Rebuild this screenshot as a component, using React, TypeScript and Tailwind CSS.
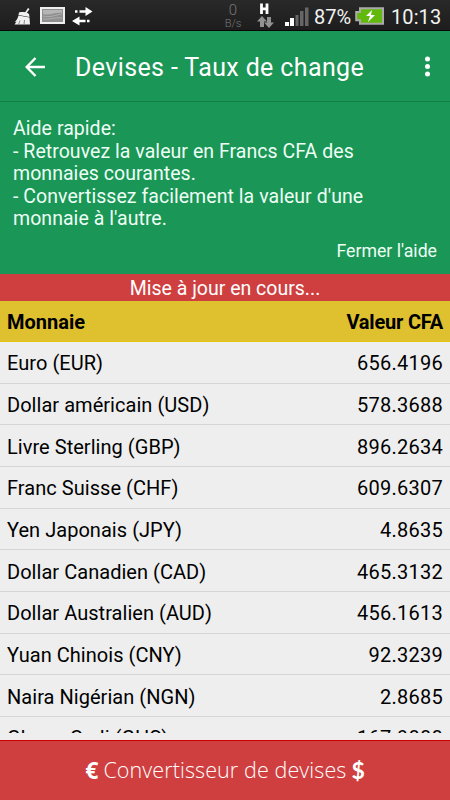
const rates = [
  { name: 'Euro (EUR)', value: '656.4196' },
  { name: 'Dollar américain (USD)', value: '578.3688' },
  { name: 'Livre Sterling (GBP)', value: '896.2634' },
  { name: 'Franc Suisse (CHF)', value: '609.6307' },
  { name: 'Yen Japonais (JPY)', value: '4.8635' },
  { name: 'Dollar Canadien (CAD)', value: '465.3132' },
  { name: 'Dollar Australien (AUD)', value: '456.1613' },
  { name: 'Yuan Chinois (CNY)', value: '92.3239' },
  { name: 'Naira Nigérian (NGN)', value: '2.8685' },
  { name: 'Ghana Cedi (GHS)', value: '167.9888' },
];

function StatusBar() {
  return (
    <div className="h-[31px] shrink-0 flex items-center bg-linear-to-b from-[#292929] to-[#1d1d1d] border-b border-[#080808] text-[#f2f2f2]">
      <svg className="w-[94px] h-[30px] shrink-0" viewBox="0 0 94 30" fill="none">
        <path d="M28 8l1.500 1-3.500 5h-2z" fill="#f0f0f0" />
        <path d="M19 12.500c3-1 7-.5 10 1.500l.5 3-11-2z" fill="#f0f0f0" />
        <path d="M18.500 15.500l11 2 .5 7H14.500l2-3-2 .5c2-1.500 3.500-4 4-6.500z" fill="#f0f0f0" />
        <path d="M20 20.500l-1.500 4M24.500 20l-.5 4.500" stroke="#8a8a8a" />
        <rect x="41" y="8" width="23" height="15" fill="#8f8f8f" stroke="#efefef" strokeWidth="2" />
        <path d="M43 10h19v3c-7-1-11 3-19 1z" fill="#b5b5b5" />
        <path d="M43 16c7 2 11-1 19-2M43 19c6 1 11-2 19-1" stroke="#b0b0b0" />
        <path d="M75 11.500h2.500M79.500 11.500h7M79 21h6.500M87 21h2.500" stroke="#fff" strokeWidth="2.600" />
        <path d="M85.500 7l7 4.500-7 4.500zM79.500 16.500l-7.500 4.500 7.500 4.500z" fill="#fff" />
      </svg>
      <div className="ml-[129px] w-5 h-[30px] pt-px flex flex-col items-center text-[#777] font-light">
        <span className="text-[15px] leading-[18px]">0</span>
        <span className="text-[11px] leading-[10px] whitespace-nowrap">B/s</span>
      </div>
      <svg className="ml-[13px] w-[56px] h-[30px] shrink-0" viewBox="0 0 56 30" fill="none">
        <path d="M5.500 3.500v10.500M11 3.500v10.500M5.500 8.800H11" stroke="#fff" strokeWidth="2.800" />
        <path d="M6 16l5 5.500H8V27H4v-5.500H1zM13 28l-5-5.500h3V17h4v5.500h3z" fill="#929292" />
        <path d="M29 22h4v4h-4zM34 18h4v8h-4z" fill="#fff" />
        <path d="M39.500 15h3v11h-3zM44 11h3.500v15H44zM49 7.500h3.500V26H49z" fill="#666" />
      </svg>
      <span className="ml-[2px] mt-[3px] w-[39px] text-[20px]">87%</span>
      <svg className="ml-[2px] mt-[2px] w-[30px] h-[18px] shrink-0" viewBox="0 0 30 18" fill="none">
        <path d="M5 1.200h23v15.600H5v-3.500H1.200V5H5z" fill="#62b80c" stroke="#aaa" strokeWidth="2" />
        <path d="M17 3l-6 6h4l-2 6 7-7h-4z" fill="#fff" />
      </svg>
      <span className="ml-[6px] mt-[3px] text-[20px] tracking-[0.1px]">10:13</span>
    </div>
  );
}

export default function App() {
  return (
    <main className="w-[450px] h-[800px] flex flex-col overflow-hidden bg-[#eee] font-['Roboto',sans-serif] text-black">
      <StatusBar />

      <header className="h-[71px] shrink-0 flex items-center bg-[#1a9656] border-b border-[#137e45] pt-px text-white">
        <button className="ml-[25px] w-5 h-5">
          <svg viewBox="0 0 20 20" fill="none" stroke="#fff" strokeWidth="2.400">
            <path d="M20 10H2M10.500 1L1.700 10l8.800 9" />
          </svg>
        </button>
        <h1 className="ml-[30px] mt-[3px] text-[25px] tracking-[0.37px] flex-1">Devises - Taux de change</h1>
        <button className="mr-5 w-[5px] h-[21px]">
          <svg viewBox="0 0 5 21" fill="#fff">
            <circle cx="2.500" cy="2.900" r="2.500" />
            <circle cx="2.500" cy="10.400" r="2.500" />
            <circle cx="2.500" cy="17.900" r="2.500" />
          </svg>
        </button>
      </header>

      <section className="h-[172px] shrink-0 bg-[#1a9656] text-[#eefff5] pl-[13px] pr-[13px] pt-[16px]">
        <div className="text-[19.500px] leading-[22.5px] tracking-[0.05px]">
          <p>Aide rapide:</p>
          <p>- Retrouvez la valeur en Francs CFA des<br />monnaies courantes.</p>
          <p>- Convertissez facilement la valeur d'une<br />monnaie à l'autre.</p>
        </div>
        <button className="block ml-auto mt-[9px] text-[17.700px] leading-[22px]">Fermer l'aide</button>
      </section>

      <div className="h-[27px] shrink-0 bg-[#cf3f40] text-white text-[19.500px] leading-[29px] text-center">
        Mise à jour en cours...
      </div>

      <div className="h-[41px] shrink-0 px-[7px] pt-[2px] flex justify-between items-center bg-[#dfc12f] border-b border-[#e7c411] text-[20px] font-bold">
        <span>Monnaie</span>
        <span className="tracking-[-0.2px]">Valeur CFA</span>
      </div>

      <div className="h-[391px] shrink-0 overflow-hidden text-[20px]">
        {rates.map((r) => (
          <div key={r.name} className="h-[41.67px] px-[7px] pt-[2px] flex justify-between items-center border-b border-[#d5d5d5]">
            <span className="tracking-[0.04px]">{r.name}</span>
            <span className="tracking-[0.25px]">{r.value}</span>
          </div>
        ))}
      </div>

      <footer className="h-[60px] mt-auto shrink-0 bg-[#cf3f40] border-t border-[#cc0000] text-white flex items-center justify-center gap-[5px]">
        <b className="font-['Open_Sans',sans-serif] text-[23px]">€</b>
        <span className="font-['Open_Sans',sans-serif] font-light text-[21.500px] tracking-[0.1px]">Convertisseur de devises</span>
        <b className="font-['Lato',sans-serif] text-[23px]">$</b>
      </footer>
    </main>
  );
}
